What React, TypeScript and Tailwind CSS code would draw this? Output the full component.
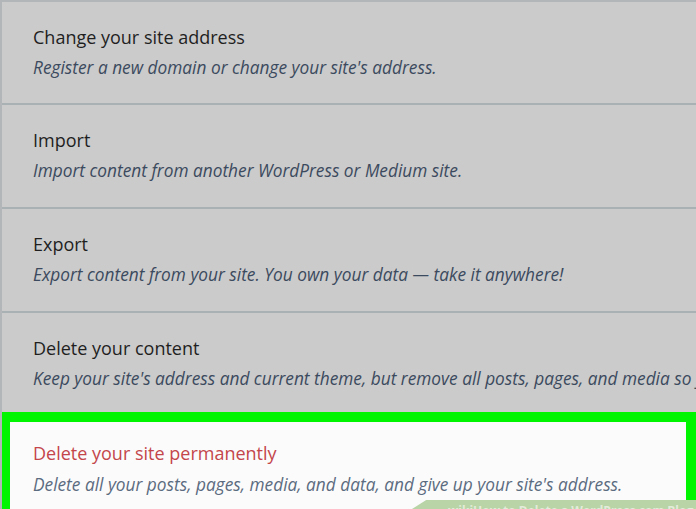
import React from 'react';

const rows = [
    { title: 'Change your site address', desc: "Register a new domain or change your site's address.", h: 'h-[103px]' },
    { title: 'Import', desc: 'Import content from another WordPress or Medium site.', h: 'h-[104px]' },
    { title: 'Export', desc: 'Export content from your site. You own your data — take it anywhere!', h: 'h-[104px]' },
    { title: 'Delete your content', desc: "Keep your site's address and current theme, but remove all posts, pages, and media so you can start over.", h: 'h-[99px]' },
];

const font = { fontFamily: '"Open Sans", "Noto Sans", sans-serif' };

const App: React.FC = () => {
    return (
        <div className="w-[696px] h-[509px] overflow-hidden bg-[#cbcbcb] border-t-2 border-l-2 border-[#b3b6b8]" style={font}>
            {rows.map((r, i) => (
                <div
                    key={r.title}
                    className={`${r.h} pl-[31px] pt-[21px] whitespace-nowrap overflow-hidden ${i < 3 ? 'border-b-2 border-[#aab1b4]' : ''}`}
                >
                    <p className="text-[18px] leading-[28px] text-[#1f1f1f]">{r.title}</p>
                    <p className="text-[17.3px] leading-[24px] mt-[5px] italic text-[#3b4a5e]">{r.desc}</p>
                </div>
            ))}
            <div className="relative -ml-[2px] h-[97px] border-[10px] border-b-0 border-[#00f500] bg-[#fbfbfb] pl-[23px] pt-[17px] whitespace-nowrap">
                <p className="text-[18px] leading-[28px] text-[#c4464b]">Delete your site permanently</p>
                <p className="text-[17.3px] leading-[24px] mt-[6px] italic text-[#5b6b80]">
                    Delete all your posts, pages, media, and data, and give up your site's address.
                </p>
                <div className="absolute -right-[10px] bottom-0 h-[9px] w-[284px] bg-[#b9d4a7] [clip-path:polygon(5%_0,100%_0,100%_100%,0_100%)] overflow-hidden">
                    <span className="block pl-[36px] pt-[4px] text-[12px] leading-[14px] font-bold text-[#e3ecda]">wikiHow to Delete a WordPress.com Blog</span>
                </div>
            </div>
        </div>
    );
};

export default App;
